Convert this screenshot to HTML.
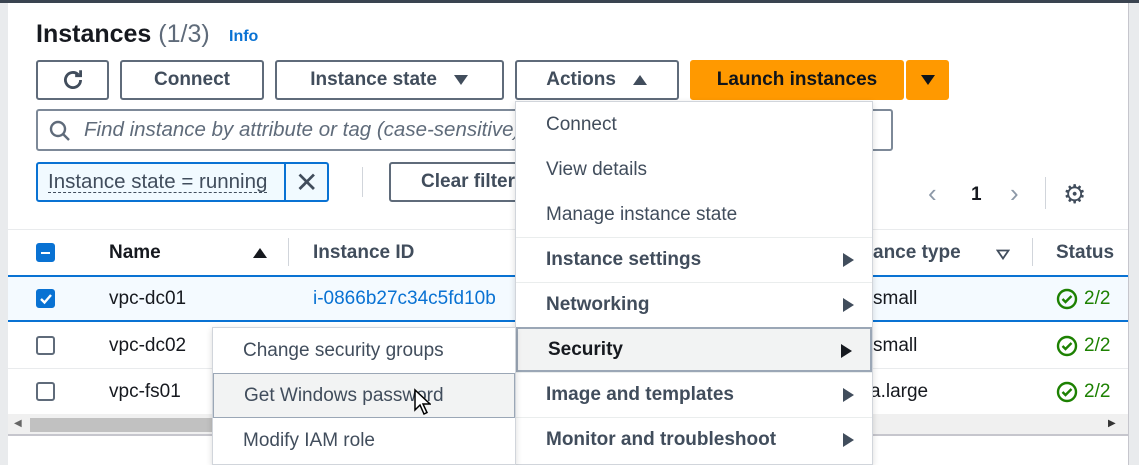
<!DOCTYPE html>
<html><head><style>
*{box-sizing:border-box;margin:0;padding:0}
body{width:1139px;height:465px;overflow:hidden;background:#fff;font-family:"Liberation Sans",sans-serif;color:#414d5c;position:relative}
.a{position:absolute}
.btn{position:absolute;border:2px solid #5f6b7a;border-radius:3px;background:#fff;font-weight:bold;font-size:19px;color:#414d5c;display:flex;align-items:center;justify-content:center}
.t{position:absolute;font-size:19px;white-space:nowrap}
.mi{position:absolute;left:0;width:100%;height:45px;font-size:19px;padding-left:30px;display:flex;align-items:center;border-top:1px solid #eaeded}
.arr{position:absolute;right:18px;top:15px;width:0;height:0;border-top:7px solid transparent;border-bottom:7px solid transparent;border-left:11px solid #414d5c}
.cb{position:absolute;width:19px;height:19px;border:2px solid #5f6b7a;border-radius:3px;background:#fff}
.ok{position:absolute;left:1056px}
</style></head><body>
<div class="a" style="left:0;top:0;width:1139px;height:3px;background:#3a4450"></div>
<div class="a" style="left:0;top:3px;width:8px;height:462px;background:#e9ebed"></div>
<div class="a" style="left:1128px;top:3px;width:11px;height:462px;background:#e9ebed;border-left:1px solid #c6c6cd"></div>

<div class="t" style="left:36px;top:20px;font-size:25px;font-weight:bold;color:#16191f">Instances <span style="font-weight:normal;color:#5f6b7a">(1/3)</span></div>
<div class="t" style="left:229px;top:28px;font-size:16px;font-weight:bold;color:#0972d3">Info</div>

<div class="btn" style="left:36px;top:60px;width:73px;height:40px"><svg width="26" height="26" viewBox="0 0 24 24"><path d="M19 12a7 7 0 1 1-2.1-5" fill="none" stroke="#414d5c" stroke-width="2.6"/><path d="M19 3v5h-5" fill="none" stroke="#414d5c" stroke-width="2.6"/></svg></div>
<div class="btn" style="left:120px;top:60px;width:144px;height:40px">Connect</div>
<div class="btn" style="left:275px;top:60px;width:229px;height:40px">Instance state&nbsp;&nbsp;&nbsp;<svg width="16" height="12" viewBox="0 0 16 12"><path d="M1 1h14L8 11z" fill="#414d5c"/></svg></div>
<div class="btn" style="left:515px;top:60px;width:164px;height:40px">Actions&nbsp;&nbsp;&nbsp;<svg width="16" height="12" viewBox="0 0 16 12"><path d="M1 11h14L8 1z" fill="#414d5c"/></svg></div>
<div class="btn" style="left:690px;top:60px;width:214px;height:40px;background:#ff9900;border-color:#ff9900;color:#0f141a">Launch instances</div>
<div class="btn" style="left:906px;top:60px;width:43px;height:40px;background:#ff9900;border-color:#ff9900"><svg width="16" height="12" viewBox="0 0 16 12"><path d="M1 1h14L8 11z" fill="#0f141a"/></svg></div>

<div class="a" style="left:36px;top:109px;width:857px;height:42px;border:2px solid #7d8998;border-radius:3px"></div>
<svg class="a" style="left:48px;top:119px" width="24" height="24" viewBox="0 0 24 24"><circle cx="10" cy="10" r="7" fill="none" stroke="#5f6b7a" stroke-width="2.4"/><path d="M15 15l6 6" stroke="#5f6b7a" stroke-width="2.4"/></svg>
<div class="t" style="left:84px;top:118px;font-size:20.5px;font-style:italic;color:#5f6b7a">Find instance by attribute or tag (case-sensitive)</div>

<div class="a" style="left:36px;top:162px;width:293px;height:40px;border:2px solid #0972d3;border-radius:3px;background:#f1faff"></div>
<div class="a" style="left:284px;top:164px;width:2px;height:36px;background:#0972d3"></div>
<div class="t" style="left:48px;top:171px;font-size:20.5px;color:#414d5c;border-bottom:1px dashed #414d5c;line-height:21px">Instance state = running</div>
<div class="t" style="left:295px;top:166px;font-size:28px;color:#414d5c">✕</div>
<div class="a" style="left:362px;top:167px;width:1px;height:30px;background:#d1d5db"></div>
<div class="btn" style="left:389px;top:162px;width:160px;height:40px;justify-content:flex-start;padding-left:30px">Clear filters</div>

<div class="t" style="left:928px;top:178px;font-size:26px;color:#8d99a8">‹</div>
<div class="t" style="left:971px;top:184px;font-weight:bold;color:#16191f">1</div>
<div class="t" style="left:1010px;top:178px;font-size:26px;color:#8d99a8">›</div>
<div class="a" style="left:1045px;top:177px;width:1px;height:32px;background:#d1d5db"></div>
<div class="t" style="left:1063px;top:179px;font-size:26px;color:#414d5c">⚙</div>

<div class="a" style="left:8px;top:229px;width:1120px;height:1px;background:#e9ebed"></div>
<div class="cb" style="left:36px;top:243px;background:#0972d3;border-color:#0972d3"><div class="a" style="left:3px;top:7px;width:9px;height:2px;background:#fff"></div></div>
<div class="t" style="left:109px;top:242px;font-weight:bold;color:#16191f">Name</div>
<div class="a" style="left:252px;top:246px"><svg width="16" height="12" viewBox="0 0 16 12"><path d="M1 11h14L8 1z" fill="#16191f"/></svg></div>
<div class="a" style="left:288px;top:238px;width:1px;height:28px;background:#d1d5db"></div>
<div class="t" style="left:313px;top:242px;font-weight:bold;color:#414d5c">Instance ID</div>
<div class="t" style="left:873px;top:242px;font-weight:bold;color:#414d5c">ance type</div>
<div class="a" style="left:996px;top:247px"><svg width="14" height="11" viewBox="0 0 14 11"><path d="M1.5 1.5h11L7 9.5z" fill="none" stroke="#414d5c" stroke-width="1.8"/></svg></div>
<div class="a" style="left:1032px;top:238px;width:1px;height:28px;background:#d1d5db"></div>
<div class="t" style="left:1056px;top:242px;font-weight:bold;color:#414d5c">Status</div>

<div class="a" style="left:8px;top:275px;width:1120px;height:47px;background:#f4faff;border-top:2px solid #0972d3;border-bottom:2px solid #0972d3"></div>
<div class="cb" style="left:36px;top:289px;background:#0972d3;border-color:#0972d3"><svg class="a" style="left:1px;top:1px" width="14" height="14" viewBox="0 0 14 14"><path d="M2 7l3.5 3.5L12 3" fill="none" stroke="#fff" stroke-width="2.4"/></svg></div>
<div class="t" style="left:109px;top:288px;color:#16191f">vpc-dc01</div>
<div class="t" style="left:313px;top:288px;color:#0972d3">i-0866b27c34c5fd10b</div>
<div class="t" style="left:873px;top:288px;color:#16191f">small</div>
<div class="a" style="left:8px;top:368px;width:1120px;height:1px;background:#e9ebed"></div>
<div class="cb" style="left:36px;top:336px"></div>
<div class="t" style="left:109px;top:335px;color:#16191f">vpc-dc02</div>
<div class="t" style="left:873px;top:335px;color:#16191f">small</div>
<div class="cb" style="left:36px;top:382px"></div>
<div class="t" style="left:109px;top:381px;color:#16191f">vpc-fs01</div>
<div class="t" style="left:870px;top:381px;color:#16191f">a.large</div>
<svg class="ok" style="top:288px" width="22" height="22" viewBox="0 0 22 22"><circle cx="11" cy="11" r="9" fill="none" stroke="#1d8102" stroke-width="2.4"/><path d="M6.5 11l3 3 6-6" fill="none" stroke="#1d8102" stroke-width="2.4"/></svg>
<div class="t" style="left:1084px;top:288px;color:#1d8102">2/2</div>
<svg class="ok" style="top:335px" width="22" height="22" viewBox="0 0 22 22"><circle cx="11" cy="11" r="9" fill="none" stroke="#1d8102" stroke-width="2.4"/><path d="M6.5 11l3 3 6-6" fill="none" stroke="#1d8102" stroke-width="2.4"/></svg>
<div class="t" style="left:1084px;top:335px;color:#1d8102">2/2</div>
<svg class="ok" style="top:381px" width="22" height="22" viewBox="0 0 22 22"><circle cx="11" cy="11" r="9" fill="none" stroke="#1d8102" stroke-width="2.4"/><path d="M6.5 11l3 3 6-6" fill="none" stroke="#1d8102" stroke-width="2.4"/></svg>
<div class="t" style="left:1084px;top:381px;color:#1d8102">2/2</div>

<div class="a" style="left:8px;top:414px;width:1120px;height:22px;background:#f0f0f0;border-bottom:2px solid #c6c6cd"></div>
<div class="a" style="left:30px;top:418px;width:400px;height:14px;background:#c1c1c1"></div>
<div class="t" style="left:14px;top:418px;font-size:10px;color:#666">◀</div>
<div class="t" style="left:1108px;top:418px;font-size:10px;color:#333">▶</div>

<div class="a" style="left:515px;top:101px;width:358px;height:364px;background:#fff;border:1px solid #d1d5db;box-shadow:0 2px 6px rgba(0,0,0,.15)">
<div class="mi" style="top:0;border-top:none">Connect</div>
<div class="mi" style="top:45px;border-top:none">View details</div>
<div class="mi" style="top:90px;border-top:none">Manage instance state</div>
<div class="mi" style="top:135px;font-weight:bold">Instance settings<span class="arr"></span></div>
<div class="mi" style="top:180px;font-weight:bold">Networking<span class="arr"></span></div>
<div class="mi" style="top:225px;font-weight:bold;color:#16191f;background:#f2f3f3;border:2px solid #9ba7b6">Security<span class="arr" style="border-left-color:#16191f"></span></div>
<div class="mi" style="top:270px;font-weight:bold">Image and templates<span class="arr"></span></div>
<div class="mi" style="top:315px;font-weight:bold">Monitor and troubleshoot<span class="arr"></span></div>
</div>

<div class="a" style="left:212px;top:327px;width:304px;height:138px;background:#fff;border:1px solid #d1d5db;box-shadow:0 2px 6px rgba(0,0,0,.15)">
<div class="mi" style="top:0;border-top:none">Change security groups</div>
<div class="mi" style="top:45px;background:#f2f3f3;border:1px solid #9ba7b6">Get Windows password</div>
<div class="mi" style="top:90px;border-top:none">Modify IAM role</div>
</div>
<svg class="a" style="left:413px;top:388px" width="18" height="28" viewBox="0 0 18 28"><path d="M2 2v20l5-5 4 9 3-1.5-4-8.5h7z" fill="#fff" stroke="#000" stroke-width="1.5"/></svg>
</body></html>
